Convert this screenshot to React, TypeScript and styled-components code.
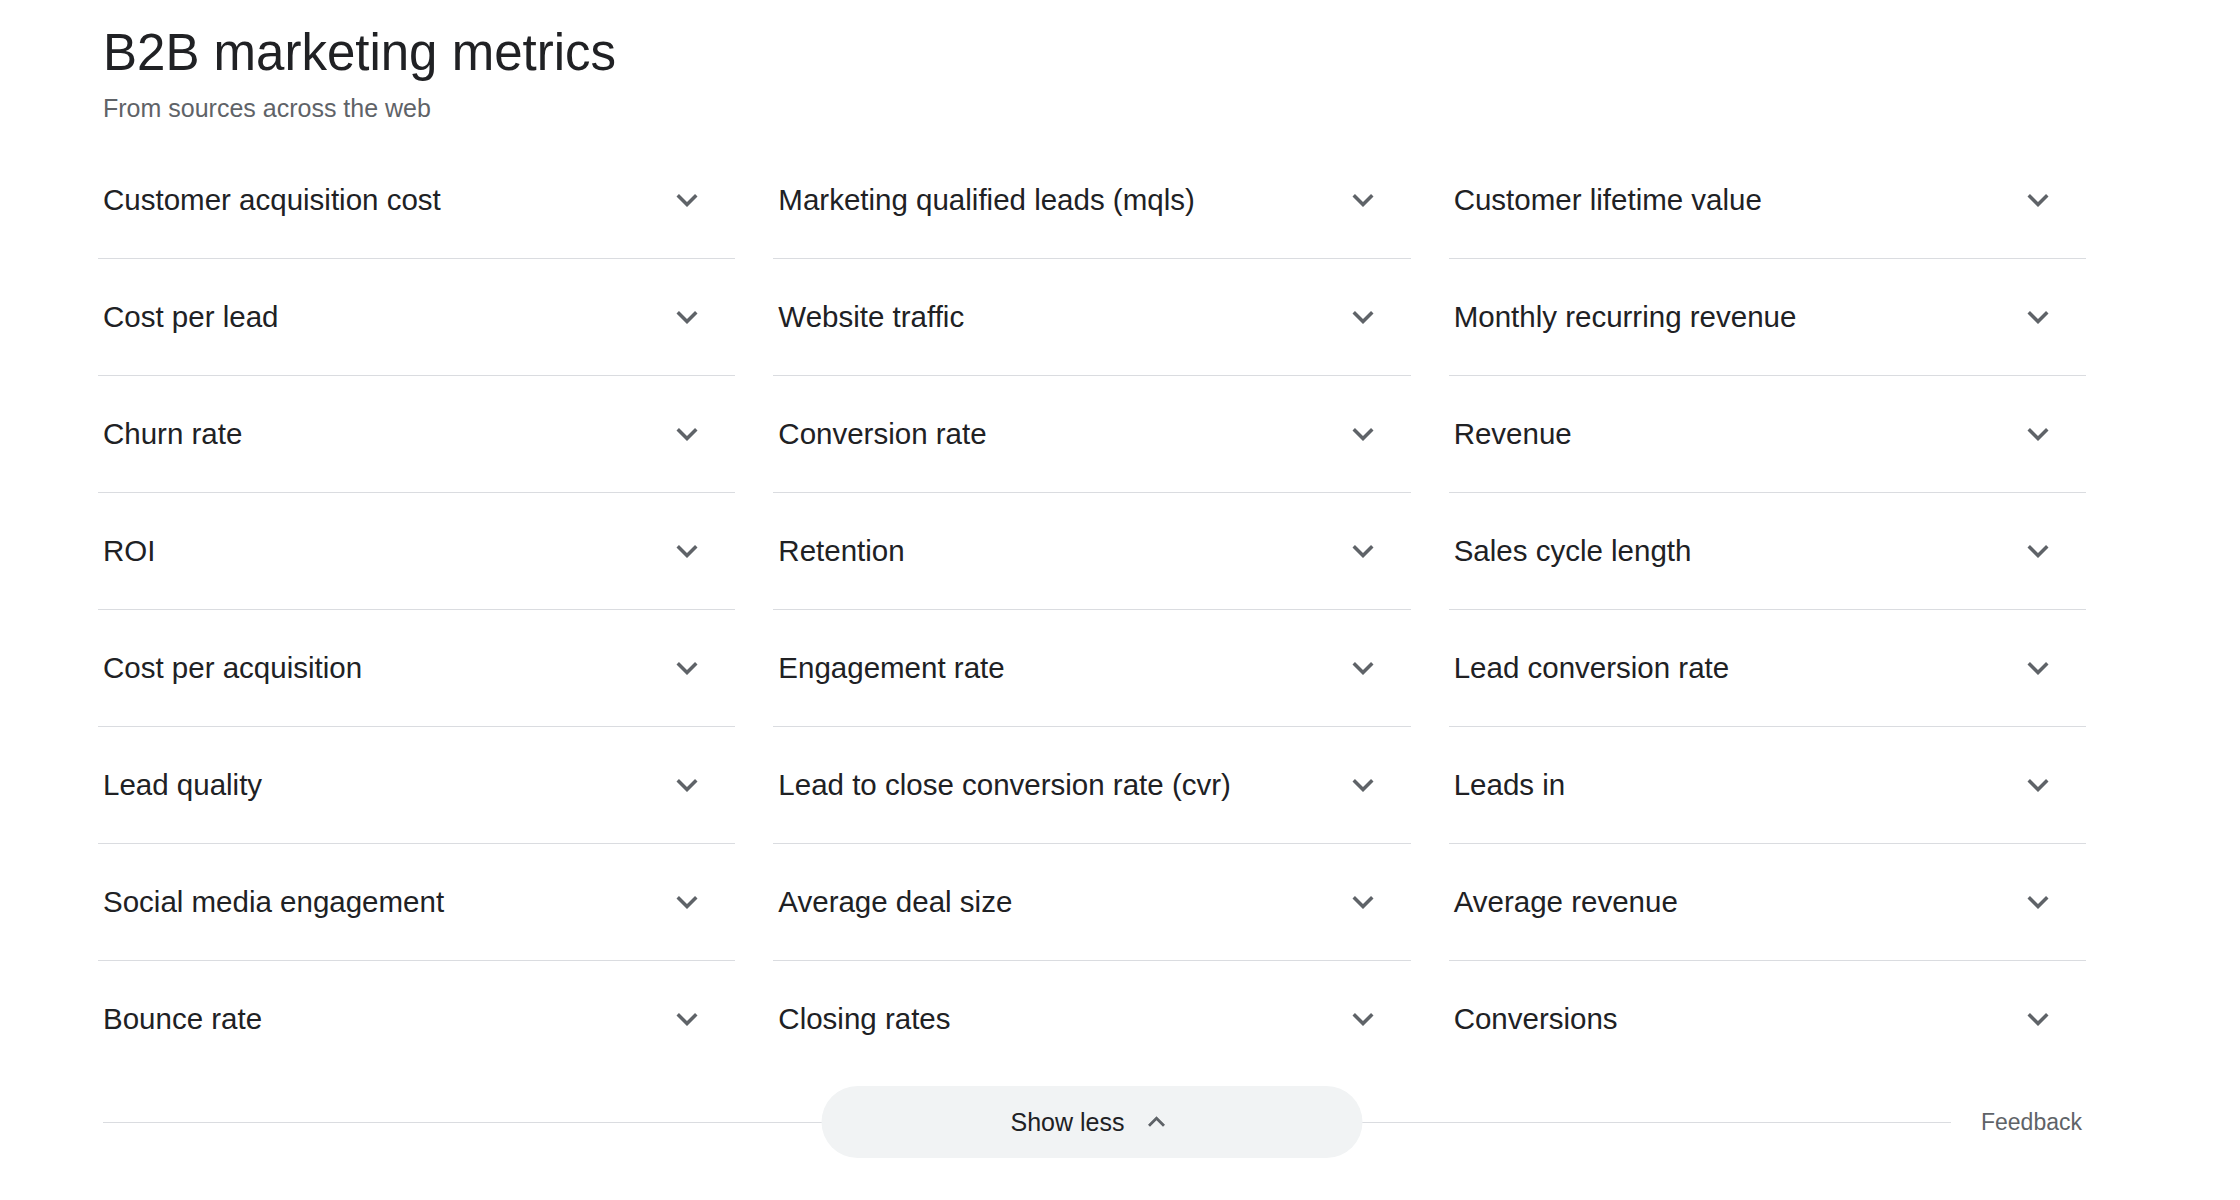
import styled, { createGlobalStyle } from "styled-components";

const GlobalStyle = createGlobalStyle`
  body {
    margin: 0;
    background: #ffffff;
    font-family: "Liberation Sans", Arial, sans-serif;
    color: #202124;
  }
`

const Page = styled.div`
  width: 1988px;
  margin-left: 98px;
  padding-top: 21px;
`

const Header = styled.div`
  padding-left: 5px;
  margin-bottom: 18px;
`

const Title = styled.h2`
  margin: 0 0 7px 0;
  font-size: 51px;
  line-height: 64px;
  font-weight: 400;
  color: #202124;
`

const Subtitle = styled.div`
  font-size: 25px;
  line-height: 32px;
  color: #5f6368;
`

const Grid = styled.div`
  display: grid;
  grid-template-columns: repeat(3, 1fr);
  column-gap: 38px;
`

const Row = styled.div`
  height: 116px;
  display: flex;
  align-items: center;
  justify-content: space-between;
  padding: 0 27px 0 5px;
  border-bottom: 1px solid #dadce0;

  &:nth-last-child(-n + 3) {
    border-bottom: none;
  }
`

const Label = styled.span`
  font-size: 29.5px;
  line-height: 38px;
  color: #202124;
`

const Icon = styled.svg<{ $size: number }>`
  width: ${(p) => p.$size}px;
  height: ${(p) => p.$size}px;
  fill: #5f6368;
  flex-shrink: 0;
`

const Footer = styled.div`
  position: relative;
  height: 72px;
  margin-top: 9px;
  display: flex;
  align-items: center;
  padding: 0 4px 0 5px;
`

const Line = styled.div`
  flex: 1;
  height: 1px;
  background: #dadce0;
`

const Feedback = styled.span`
  margin-left: 30px;
  font-size: 23px;
  color: #5f6368;
`

const ShowLess = styled.button`
  position: absolute;
  left: 50%;
  top: 0;
  transform: translateX(-50%);
  width: 541px;
  height: 72px;
  border: none;
  border-radius: 36px;
  background: #f1f3f4;
  display: flex;
  align-items: center;
  justify-content: center;
  gap: 15px;
  font-family: "Liberation Sans", Arial, sans-serif;
  font-size: 25px;
  color: #202124;
  cursor: pointer;
`

const metrics = [
  "Customer acquisition cost", "Marketing qualified leads (mqls)", "Customer lifetime value",
  "Cost per lead", "Website traffic", "Monthly recurring revenue",
  "Churn rate", "Conversion rate", "Revenue",
  "ROI", "Retention", "Sales cycle length",
  "Cost per acquisition", "Engagement rate", "Lead conversion rate",
  "Lead quality", "Lead to close conversion rate (cvr)", "Leads in",
  "Social media engagement", "Average deal size", "Average revenue",
  "Bounce rate", "Closing rates", "Conversions",
]

const ExpandMore = () => (
  <Icon $size={42} viewBox="0 0 24 24">
    <path d="M16.59 8.59 12 13.17 7.41 8.59 6 10l6 6 6-6z" />
  </Icon>
)

const ExpandLess = () => (
  <Icon $size={34} viewBox="0 0 24 24">
    <path d="M12 8l-6 6 1.41 1.41L12 10.83l4.59 4.58L18 14z" />
  </Icon>
)

const App = () => {
  return (
    <>
      <GlobalStyle />
      <Page>
        <Header>
          <Title>B2B marketing metrics</Title>
          <Subtitle>From sources across the web</Subtitle>
        </Header>
        <Grid>
          {metrics.map((m) => (
            <Row key={m}>
              <Label>{m}</Label>
              <ExpandMore />
            </Row>
          ))}
        </Grid>
        <Footer>
          <Line />
          <Feedback>Feedback</Feedback>
          <ShowLess>
            Show less
            <ExpandLess />
          </ShowLess>
        </Footer>
      </Page>
    </>
  )
}

export default App
